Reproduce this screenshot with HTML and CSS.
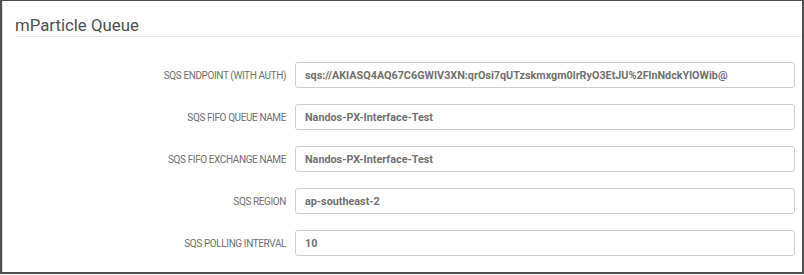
FILE: index.html
```html
<!DOCTYPE html>
<html lang="en">
<head>
  <meta charset="UTF-8" />
  <meta name="viewport" content="width=device-width, initial-scale=1.0" />
  <title>mParticle Queue</title>
  <link rel="stylesheet" href="styles.css">
</head>
<body>
  <div class="frame">
    <section class="panel">
      <h2 class="panel-title">mParticle Queue</h2>

      <form class="settings">
        <label class="field-label" for="sqs-endpoint">SQS Endpoint (with auth)</label>
        <input class="field-input" id="sqs-endpoint" type="text" value="sqs://AKIASQ4AQ67C6GWIV3XN:qrOsi7qUTzskmxgm0lrRyO3EtJU%2FlnNdckYlOWib@" />

        <label class="field-label" for="sqs-queue">SQS FIFO Queue Name</label>
        <input class="field-input" id="sqs-queue" type="text" value="Nandos-PX-Interface-Test" />

        <label class="field-label" for="sqs-exchange">SQS FIFO Exchange Name</label>
        <input class="field-input" id="sqs-exchange" type="text" value="Nandos-PX-Interface-Test" />

        <label class="field-label" for="sqs-region">SQS Region</label>
        <input class="field-input" id="sqs-region" type="text" value="ap-southeast-2" />

        <label class="field-label" for="sqs-interval">SQS Polling Interval</label>
        <input class="field-input" id="sqs-interval" type="text" value="10" />
      </form>
    </section>
  </div>
</body>
</html>
```

FILE: styles.css
```css
* { margin: 0; padding: 0; box-sizing: border-box; }
body {
  font-family: Roboto, 'Liberation Sans', sans-serif;
  background: #fff;
  color: #444;
}

/* Outer window frame */
.frame {
  width: 804px;
  height: 274px;
  border-style: solid;
  border-color: #4f4f4f;
  border-width: 1px 2px 2px 2px;
  box-shadow: 0 1px 0 #d4d4d4;
}
.panel {
  height: 100%;
  border-left: 1px solid #dedede;
  background: #fff;
}

/* Title */
.panel-title {
  margin-left: 12px;
  padding: 14px 0 1px 0;
  font-size: 16.8px;
  line-height: 20px;
  font-weight: 400;
  color: #505050;
  border-bottom: 1px solid #e8e8e8;
}

/* Form rows */
.settings {
  display: grid;
  grid-template-columns: 269px 1fr;
  column-gap: 9px;
  row-gap: 16px;
  align-items: center;
  padding: 25px 7px 0 14px;
}
.field-label {
  text-align: right;
  font-size: 10px;
  letter-spacing: -0.4px;
  text-transform: uppercase;
  color: #707070;
}
.field-input {
  height: 26px;
  width: 100%;
  padding: 0 9px;
  border: 1px solid #cfcfcf;
  border-radius: 3px;
  background: #fff;
  font-family: Roboto, 'Liberation Sans', sans-serif;
  font-size: 10.8px;
  font-weight: 700;
  color: #717171;
  outline: none;
}
```
